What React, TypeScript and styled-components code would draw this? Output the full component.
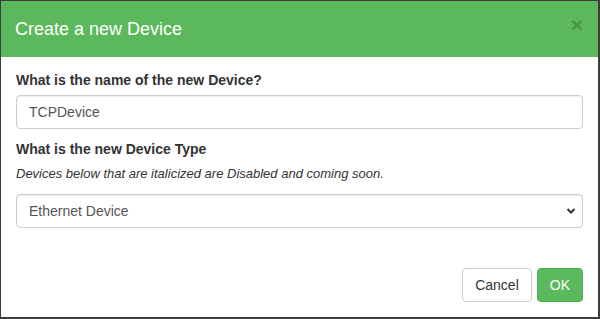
import React from "react";
import styled, { createGlobalStyle } from "styled-components";

const Global = createGlobalStyle`
  html, body { margin: 0; padding: 0; }
  body {
    background: #3d3d3d;
    font-family: "Liberation Sans", Arial, sans-serif;
    font-size: 14px;
    color: #333;
  }
  * { box-sizing: border-box; }
`;

const Modal = styled.div`
  margin: 1px 2px 2px 1px;
  width: 597px;
  height: 316px;
  background: #fff;
  display: flex;
  flex-direction: column;
`;

const Header = styled.div`
  background: #5cb85c;
  height: 56px;
  padding: 0 15px 0 14px;
  display: flex;
  align-items: center;
  justify-content: space-between;
`;

const Title = styled.h4`
  margin: 0;
  font-size: 18px;
  font-weight: normal;
  color: #fff;
  line-height: 26px;
`;

const Close = styled.button`
  border: 0;
  background: transparent;
  padding: 0;
  font-family: "Liberation Sans", Arial, sans-serif;
  font-size: 21px;
  font-weight: bold;
  line-height: 1;
  color: #000;
  opacity: 0.2;
  margin-top: -9px;
  cursor: pointer;
`;

const Body = styled.div`
  padding: 13px 15px 0 15px;
  display: flex;
  flex-direction: column;
  flex: 1;
`;

const Group = styled.div<{ $mb?: number }>`
  display: flex;
  flex-direction: column;
  margin-bottom: ${(p) => p.$mb ?? 10}px;
`;

const Label = styled.label`
  font-weight: bold;
  line-height: 20px;
  margin-bottom: 5px;
`;

const Help = styled.p`
  margin: 0 0 10px 0;
  font-style: italic;
  font-size: 13px;
  line-height: 20px;
  color: #333;
`;

const Input = styled.input`
  height: 34px;
  padding: 6px 12px;
  border: 1px solid #ccc;
  border-radius: 4px;
  font-family: inherit;
  font-size: 14px;
  color: #555;
  box-shadow: inset 0 1px 1px rgba(0, 0, 0, 0.075);
  outline: none;
  width: 100%;
`;

const SelectWrap = styled.div`
  position: relative;
`;

const Select = styled.select`
  appearance: none;
  -webkit-appearance: none;
  height: 34px;
  width: 100%;
  padding: 6px 12px;
  border: 1px solid #ccc;
  border-radius: 4px;
  font-family: inherit;
  font-size: 14px;
  color: #555;
  background: #fff;
  box-shadow: inset 0 1px 1px rgba(0, 0, 0, 0.075);
  outline: none;
`;

const Chevron = styled.svg`
  position: absolute;
  right: 7px;
  top: 13px;
  pointer-events: none;
`;

const Footer = styled.div`
  margin-top: auto;
  padding: 15px;
  display: flex;
  justify-content: flex-end;
  gap: 5px;
`;

const Button = styled.button<{ $primary?: boolean }>`
  height: 34px;
  padding: 6px 12px;
  font-family: inherit;
  font-size: 14px;
  line-height: 20px;
  border-radius: 4px;
  border: 1px solid ${(p) => (p.$primary ? "#4cae4c" : "#ccc")};
  background: ${(p) => (p.$primary ? "#5cb85c" : "#fff")};
  color: ${(p) => (p.$primary ? "#fff" : "#333")};
  cursor: pointer;
`;

export default function App() {
  return (
    <>
      <Global />
      <Modal>
        <Header>
          <Title>Create a new Device</Title>
          <Close aria-label="Close">×</Close>
        </Header>
        <Body>
          <Group>
            <Label>What is the name of the new Device?</Label>
            <Input defaultValue="TCPDevice" />
          </Group>
          <Group $mb={0}>
            <Label>What is the new Device Type</Label>
            <Help>Devices below that are italicized are Disabled and coming soon.</Help>
            <SelectWrap>
              <Select defaultValue="eth">
                <option value="eth">Ethernet Device</option>
              </Select>
              <Chevron width="10" height="8" viewBox="0 0 10 8">
                <path d="M1.5 2 L5 5.5 L8.5 2" fill="none" stroke="#333" strokeWidth="2" />
              </Chevron>
            </SelectWrap>
          </Group>
        </Body>
        <Footer>
          <Button>Cancel</Button>
          <Button $primary>OK</Button>
        </Footer>
      </Modal>
    </>
  );
}
